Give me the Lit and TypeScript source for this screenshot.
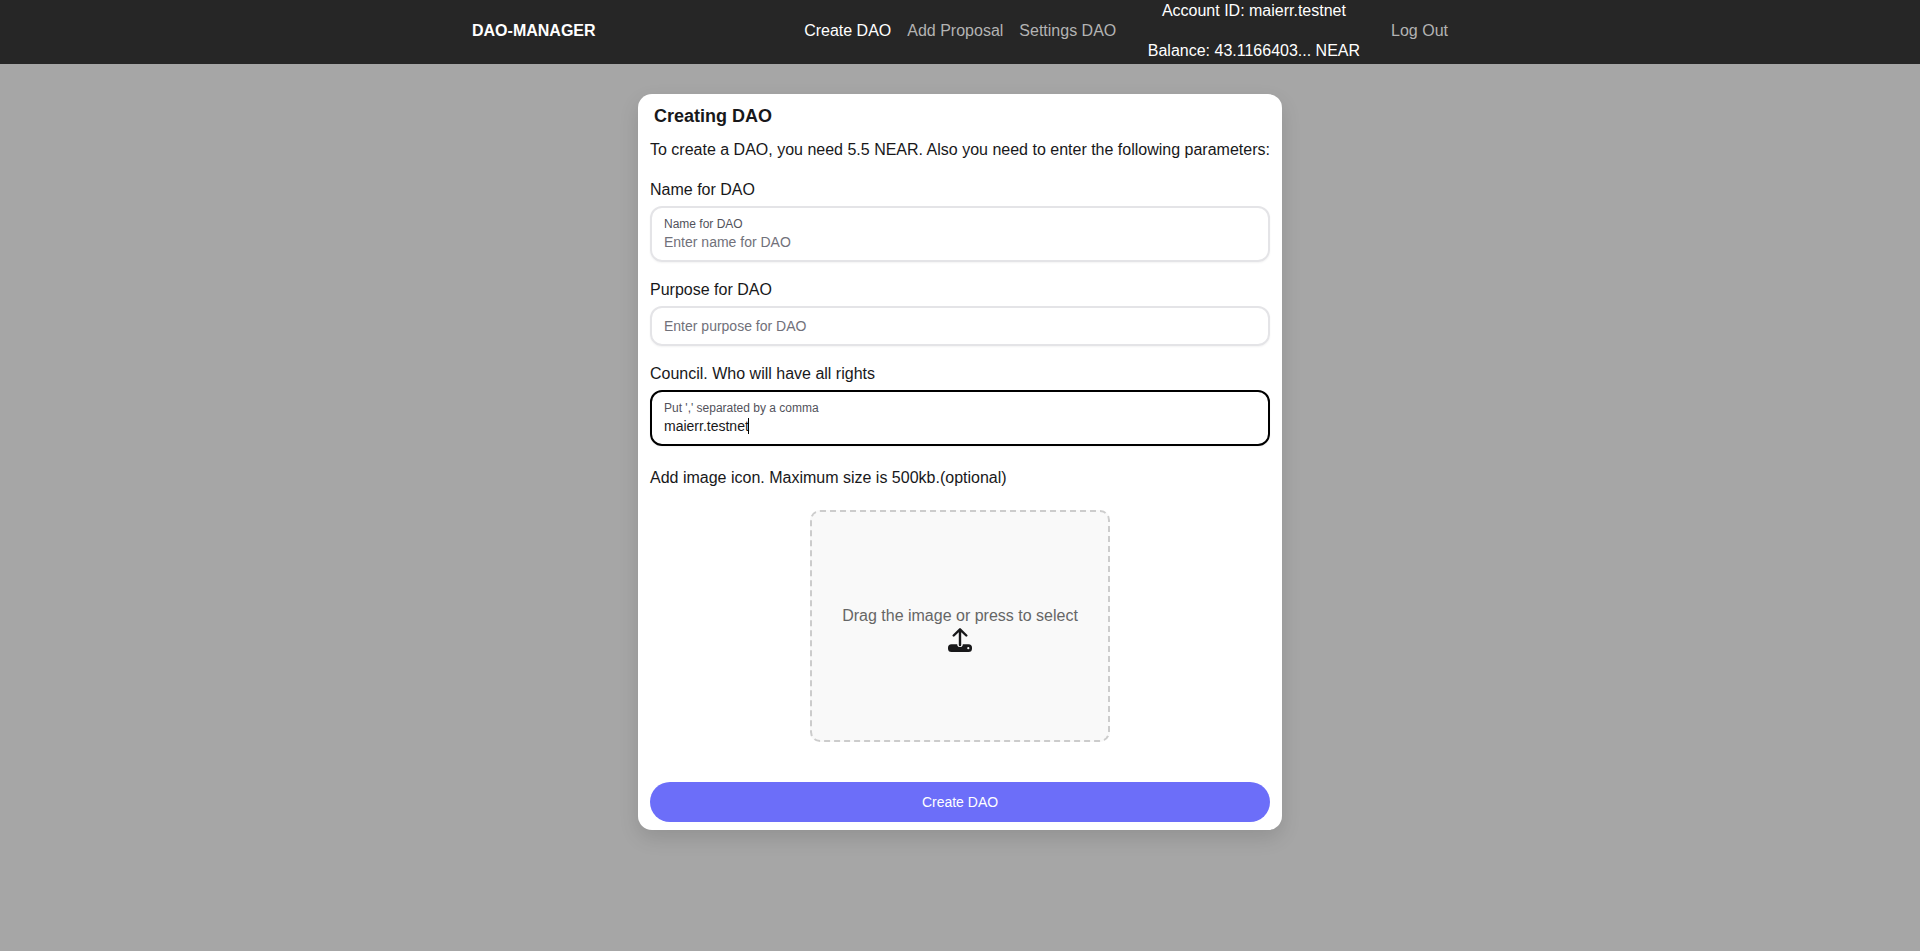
import { LitElement, html, css, nothing } from "lit";
import { customElement, property } from "lit/decorators.js";

@customElement("dao-field")
class DaoField extends LitElement {
  @property() caption = "";
  @property() label = "";
  @property() placeholder = "";
  @property() value = "";
  @property({ type: Boolean }) active = false;

  static styles = css`
    :host { display: block; }
    .caption { margin: 0; padding-top: 1px; line-height: 24px; }
    .box {
      box-sizing: border-box;
      height: 40px;
      margin-top: 4px;
      padding: 0 12px;
      border: 2px solid #e4e4e7;
      border-radius: 12px;
      box-shadow: 0 1px 2px rgba(0, 0, 0, 0.05);
      display: flex;
      flex-direction: column;
      justify-content: center;
      font-size: 14px;
      line-height: 20px;
    }
    .tall { height: 56px; }
    .active { border-color: #000; }
    .label { font-size: 12px; line-height: 16px; color: #52525b; }
    .line { display: flex; align-items: center; height: 20px; }
    .hint { color: #71717a; }
    .caret { width: 1px; height: 16px; margin-left: -1px; background: #000; }
  `;

  render() {
    return html`
      <p class="caption">${this.caption}</p>
      <div class="box ${this.label ? "tall" : ""} ${this.active ? "active" : ""}">
        ${this.label ? html`<span class="label">${this.label}</span>` : nothing}
        <div class="line">
          ${this.value
            ? html`<span>${this.value}</span>`
            : html`<span class="hint">${this.placeholder}</span>`}
          ${this.active ? html`<span class="caret"></span>` : nothing}
        </div>
      </div>
    `;
  }
}

@customElement("app-root")
class AppRoot extends LitElement {
  static styles = css`
    :host {
      display: block;
      min-height: 951px;
      background: #a6a6a6;
      color: #18181a;
      font: 16px/24px "Liberation Sans", Arial, sans-serif;
    }
    .nav { height: 64px; background: #262626; color: #fff; display: flex; justify-content: center; }
    .inner {
      box-sizing: border-box;
      width: 1024px;
      padding: 0 24px;
      display: flex;
      align-items: center;
      justify-content: space-between;
      white-space: nowrap;
    }
    .brand { font-weight: 700; padding-bottom: 2px; }
    .links { display: flex; align-items: center; gap: 16px; }
    .links > span { padding-bottom: 2px; }
    .dim { color: #b3b3b3; }
    .account { text-align: center; line-height: 20px; margin: 0 15px 0 15.5px; padding-bottom: 2px; }
    .account p { margin: 0; }
    .account p + p { margin-top: 20px; }
    .main { display: flex; justify-content: center; padding-top: 30px; }
    .card {
      box-sizing: border-box;
      width: 644px;
      height: 736px;
      padding: 8px 12px;
      border-radius: 14px;
      background: #fff;
      box-shadow: 0 8px 20px rgba(0, 0, 0, 0.12);
      display: flex;
      flex-direction: column;
    }
    h1 { margin: 0 4px; font-size: 18px; line-height: 28px; }
    .intro { margin: 8px 0 15px; white-space: nowrap; }
    .field { margin-bottom: 15px; }
    .note { margin: 5px 0 20px; }
    .drop {
      box-sizing: border-box;
      width: 300px;
      height: 232px;
      align-self: center;
      padding-top: 4px;
      border: 2px dashed #ccc;
      border-radius: 10px;
      background: #f9f9f9;
      display: flex;
      flex-direction: column;
      align-items: center;
      justify-content: center;
      color: #666;
    }
    .drop svg { display: block; color: #18181a; }
    .drop p { margin: 0; }
    .submit {
      height: 40px;
      margin-top: auto;
      border: 0;
      border-radius: 20px;
      background: #6c6ef9;
      color: #fff;
      font: 14px/20px "Liberation Sans", Arial, sans-serif;
    }
  `;

  render() {
    return html`
      <nav class="nav">
        <div class="inner">
          <span class="brand">DAO-MANAGER</span>
          <div class="links">
            <span>Create DAO</span>
            <span class="dim">Add Proposal</span>
            <span class="dim">Settings DAO</span>
            <div class="account">
              <p>Account ID: maierr.testnet</p>
              <p>Balance: 43.1166403... NEAR</p>
            </div>
            <span class="dim">Log Out</span>
          </div>
        </div>
      </nav>
      <main class="main">
        <section class="card">
          <h1>Creating DAO</h1>
          <p class="intro">To create a DAO, you need 5.5 NEAR. Also you need to enter the following parameters:</p>
          <dao-field class="field" caption="Name for DAO" label="Name for DAO" placeholder="Enter name for DAO"></dao-field>
          <dao-field class="field" caption="Purpose for DAO" placeholder="Enter purpose for DAO"></dao-field>
          <dao-field class="field" caption="Council. Who will have all rights" label="Put ',' separated by a comma" value="maierr.testnet" active></dao-field>
          <p class="note">Add image icon. Maximum size is 500kb.(optional)</p>
          <div class="drop">
            <p>Drag the image or press to select</p>
            <svg width="24" height="24" viewBox="0 0 24 24" fill="none">
              <path
                fill="currentColor"
                fill-rule="evenodd"
                d="M3.500 16.300H9.200a2.800 2.800 0 0 0 5.600 0H20.500a3.500 3.500 0 0 1 3.500 3.500V20.500a3.500 3.500 0 0 1-3.500 3.500H3.500a3.500 3.500 0 0 1-3.500-3.500v-.700a3.500 3.500 0 0 1 3.500-3.500ZM20.300 19.100a1.100 1.100 0 1 0 0 2.200a1.100 1.100 0 0 0 0-2.200Z"
              />
              <path
                d="M12 17V1.500M5.700 7.500 12 1.300l6.300 6.200"
                stroke="currentColor"
                stroke-width="2.400"
                stroke-linecap="round"
                stroke-linejoin="round"
              />
            </svg>
          </div>
          <button class="submit">Create DAO</button>
        </section>
      </main>
    `;
  }
}
